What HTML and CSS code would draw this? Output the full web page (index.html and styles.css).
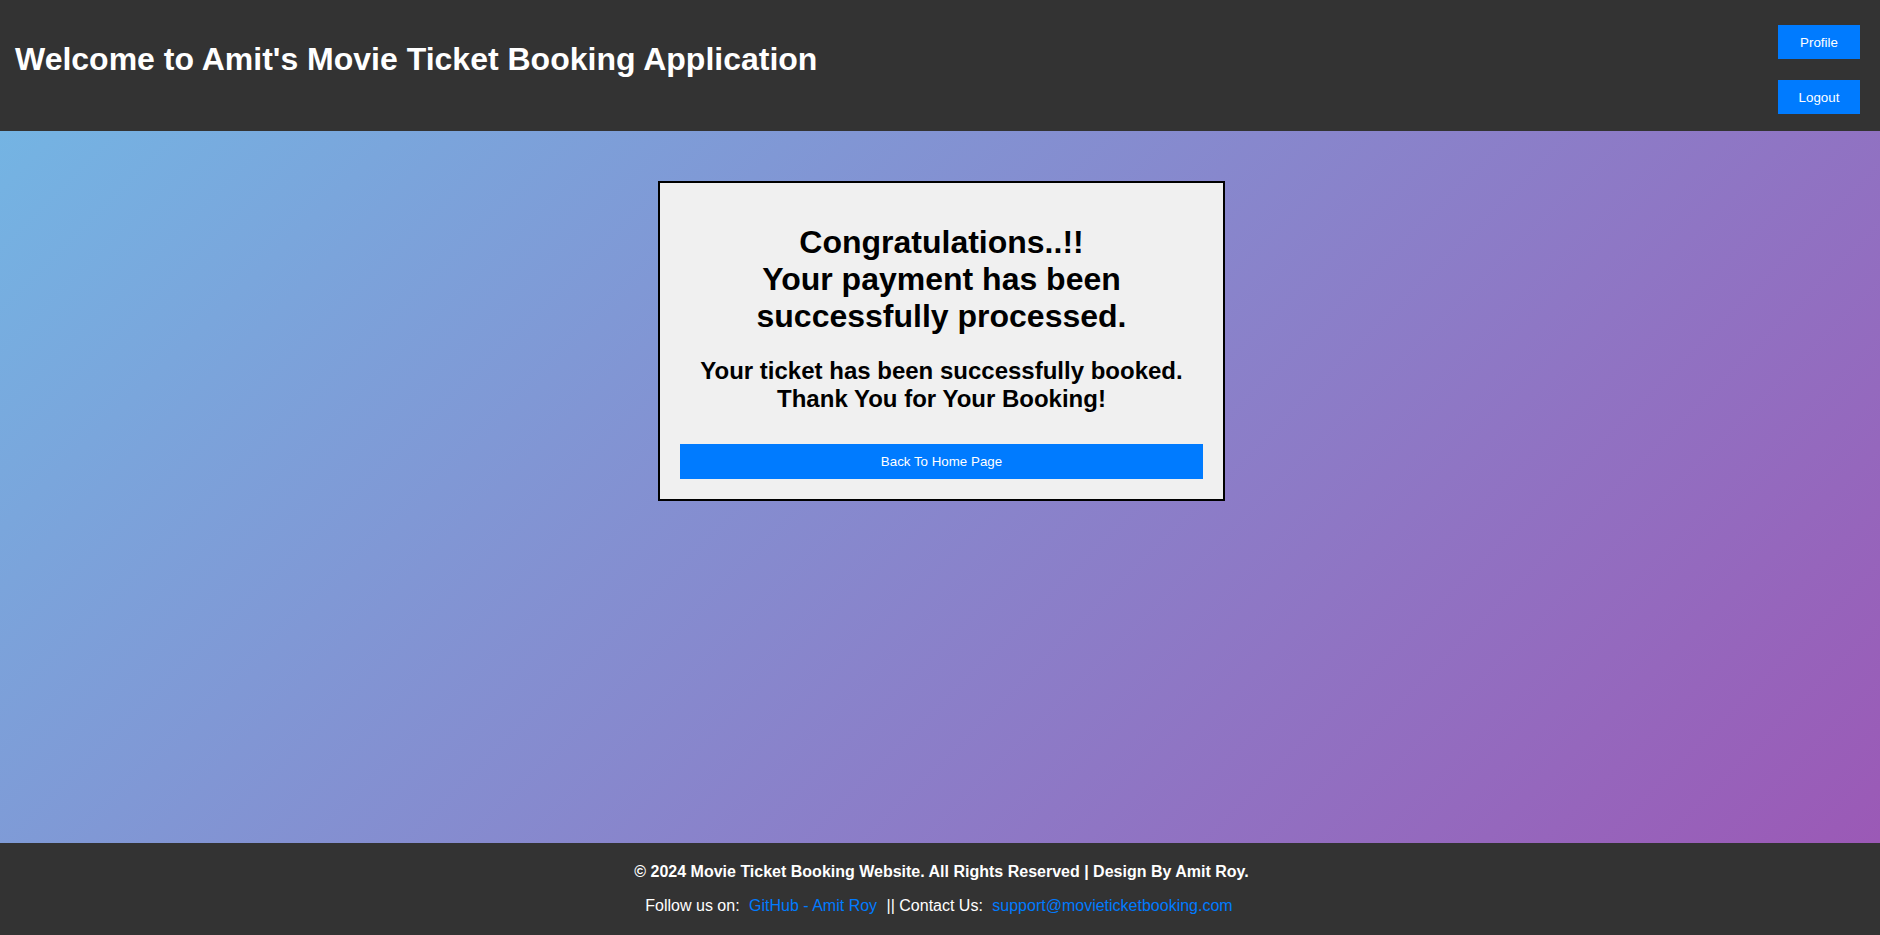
FILE: index.html
```html
<!DOCTYPE html>
<html lang="en">
<head>
<meta charset="UTF-8">
<title>Payment Successful</title>
<link rel="stylesheet" href="styles.css">
</head>
<body>
<header class="site-header">
  <h1 class="site-title">Welcome to Amit's Movie Ticket Booking Application</h1>
  <nav class="header-nav">
    <button class="nav-btn">Profile</button>
    <button class="nav-btn">Logout</button>
  </nav>
</header>
<main class="main">
  <div class="card">
    <h1 class="card-title">Congratulations..!!<br>Your payment has been<br>successfully processed.</h1>
    <h2 class="card-sub">Your ticket has been successfully booked.<br>Thank You for Your Booking!</h2>
    <button class="home-btn">Back To Home Page</button>
  </div>
</main>
<footer class="site-footer">
  <p class="footer-copy">© 2024 Movie Ticket Booking Website. All Rights Reserved | Design By Amit Roy.</p>
  <p class="footer-links">Follow us on: <a href="#" class="footer-link">GitHub - Amit Roy</a> || Contact Us: <a href="#" class="footer-link">support@movieticketbooking.com</a></p>
</footer>
</body>
</html>
```

FILE: styles.css
```css
* { box-sizing: border-box; }
html, body { margin: 0; padding: 0; }
body {
  font-family: "Liberation Sans", Arial, sans-serif;
  min-height: 100vh;
  display: flex;
  flex-direction: column;
}
.site-header {
  background: #333333;
  color: #ffffff;
  display: flex;
  justify-content: space-between;
  align-items: flex-start;
  padding: 20px 20px 17px 15px;
}
.site-title {
  font-size: 32px;
  font-weight: bold;
  margin: 21.44px 0;
}
.header-nav {
  display: flex;
  flex-direction: column;
  gap: 21px;
  padding-top: 5px;
}
.nav-btn {
  width: 82px;
  height: 34px;
  background: #007bff;
  color: #ffffff;
  border: none;
  font-family: "Liberation Sans", Arial, sans-serif;
  font-size: 13.33px;
  padding: 0;
  cursor: pointer;
}
.main {
  flex: 1;
  background: linear-gradient(135deg, #74b4e3, #9b59b6);
  padding: 50px 0 0 3px;
  display: flex;
  flex-direction: column;
  align-items: center;
}
.card {
  width: 567px;
  background: #f0f0f0;
  border: 2px solid #000000;
  padding: 20px;
  text-align: center;
  display: flex;
  flex-direction: column;
}
.card-title {
  font-size: 32px;
  font-weight: bold;
  margin: 21.44px 0;
}
.card-sub {
  font-size: 24px;
  font-weight: bold;
  margin: 0 0 19.92px;
}
.home-btn {
  margin-top: 11px;
  height: 35px;
  width: 100%;
  background: #007bff;
  color: #ffffff;
  border: none;
  font-family: "Liberation Sans", Arial, sans-serif;
  font-size: 13.33px;
  cursor: pointer;
}
.site-footer {
  background: #333333;
  color: #ffffff;
  text-align: center;
  padding: 20px 0 20px 3px;
  font-size: 16px;
}
.site-footer p { margin: 0; }
.footer-copy { font-weight: bold; }
.footer-links { margin-top: 16px !important; }
.footer-link {
  color: #007bff;
  text-decoration: none;
  margin: 0 5px;
}
```
